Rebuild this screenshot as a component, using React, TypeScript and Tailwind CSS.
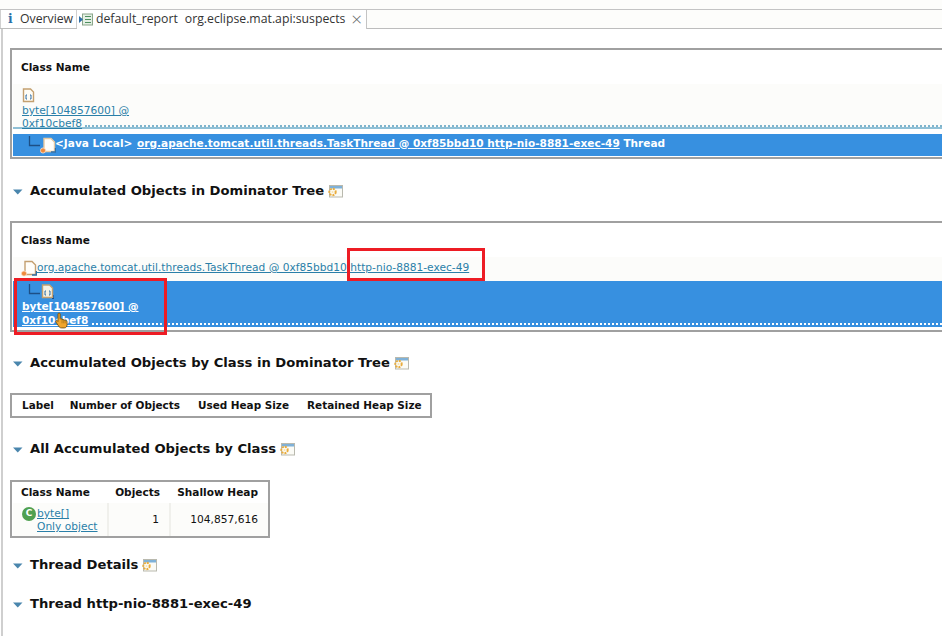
import React from "react";

function FileIcon({ light = false }: { light?: boolean }) {
  return (
    <svg width="13" height="15" viewBox="0 0 13 15" className="block shrink-0">
      <path d="M1.5 1 H8.5 L11.5 4 V13.5 H1.5 Z" fill={light ? "#f4f1e4" : "#fffdf6"} stroke="#c4a070" strokeWidth="1.4" />
      <path d="M5 7 H4 V11 H5 M8 7 H9 V11 H8" fill="none" stroke="#2f6fa8" strokeWidth="1" />
      {light && <path d="M11 14.5 H13 V11" fill="none" stroke="#1d4f86" strokeWidth="1.2" />}
    </svg>
  );
}

function ThreadIcon({ selected = false }: { selected?: boolean }) {
  return (
    <svg width="16" height="17" viewBox="0 0 16 17" className="block shrink-0">
      <path d="M4 1.5 H11 L14.5 5 V14.5 H4 Z" fill="#fffefa" stroke={selected ? "#e8c9a0" : "#c4a070"} strokeWidth="1.4" />
      <path d="M11 15 H15.5 V11" fill="none" stroke="#2f6fa8" strokeWidth="1.4" />
      <circle cx="3" cy="13.5" r="2.6" fill="#ef8a3c" stroke="#fbe3cf" strokeWidth="0.8" />
    </svg>
  );
}

function GearWindow() {
  return (
    <svg width="15" height="14" viewBox="0 0 15 14" className="block shrink-0">
      <rect x="1.5" y="1.5" width="13" height="11.5" fill="#fbfbf6" stroke="#b9b9ae" />
      <rect x="2" y="2" width="12" height="2.5" fill="#7fb1d8" />
      <circle cx="4.5" cy="8" r="3.2" fill="none" stroke="#e9ac3d" strokeWidth="2" strokeDasharray="2 1" />
      <circle cx="4.5" cy="8" r="1" fill="#f7e3ae" />
    </svg>
  );
}

function Section({ title, icon = true, className = "" }: { title: string; icon?: boolean; className?: string }) {
  return (
    <div className={`flex items-center h-5 pl-[5px] ${className}`}>
      <svg width="10" height="6" viewBox="0 0 10 6" className="block shrink-0 mr-[7px] mt-[2px]">
        <path d="M0 0.5 H9.5 L4.75 5.5 Z" fill="#4a86ad" />
      </svg>
      <span className="font-bold text-[13.15px] text-[#111111] whitespace-nowrap mr-[4px]">{title}</span>
      {icon && <GearWindow />}
    </div>
  );
}

function HandCursor() {
  return (
    <svg width="13" height="17" viewBox="0 0 14 18" className="absolute left-[55px] top-[312px]">
      <path
        d="M3.2 2 C3.2 0.6 5.6 0.6 5.6 2 V7.2 H7.6 V8 H9.4 V8.6 H11 C12.4 8.8 13 9.6 13 11 V13.5 C13 15.5 11.8 17 10 17 H7 C5.6 17 4.8 16.4 4 15.2 L1 10.6 C0.4 9.4 1.8 8.4 2.8 9.4 L3.2 10 Z"
        fill="#f0a52c"
        stroke="#6e4a0e"
        strokeWidth="0.9"
      />
      <path d="M7.6 8 V12 M9.4 8.6 V12 M11 8.8 V12" stroke="#9a6a14" strokeWidth="0.7" fill="none" />
    </svg>
  );
}

export default function App() {
  const link = "text-[#2a7fa8] underline";
  return (
    <div className="relative w-[942px] h-[636px] overflow-hidden bg-white font-['DejaVu_Sans',Verdana,sans-serif] text-[10.65px] text-[#111111]">
      <div className="h-[9px] bg-[#fdfdfb] border-b border-[#c4c4c4] box-content" />
      <div className="flex h-[18px] border-b border-[#bdbdbd] box-content bg-[#fdfdfb] font-['Open_Sans',sans-serif] text-[12.25px] text-[#333333]">
        <div className="flex items-center w-[77px] pl-[7px] bg-white border-l border-r border-[#d0d0d0]">
          <span className="font-['DejaVu_Serif',serif] font-bold text-[#2a6fa8] w-[12px]">i</span>
          <span>Overview</span>
        </div>
        <div className="flex items-center w-[290px] pl-[2px] bg-white border-r border-[#c4c4c4] relative -mb-px">
          <svg width="14" height="13" viewBox="0 0 14 13" className="block shrink-0 mr-[3px]">
            <rect x="3.5" y="1" width="10" height="11" fill="#e4efe4" stroke="#8aa58a" />
            <path d="M6 3.5 H12 M6 6.5 H12 M6 9.5 H12" stroke="#4f8f5f" />
            <path d="M0 3 L4 6.5 L0 10 Z" fill="#2f6fa8" />
          </svg>
          <span>default_report</span>
          <span className="ml-[7px]">org.eclipse.mat.api:suspects</span>
          <span className="ml-[6px] text-[#666666] text-[19px] font-light leading-none">×</span>
        </div>
      </div>

      <div className="ml-[1px] border-l-2 border-[#cfcfcf] h-[608px] pl-[7px] pt-[19px]">
        <div className="border-y-2 border-l-2 border-[#a0a0a0] h-[111px] pl-[1px] pt-[1px]">
          <div className="h-[33px] pl-[8px] pt-[9px] font-bold text-[10.55px] leading-[14px]">Class Name</div>
          <div className="h-[45px] bg-[#fcfcfa] pl-[9px] pt-[4px] border-b-2 border-[#8fc0d6]">
            <FileIcon />
            <div className={`${link} leading-[13px] mt-[1px]`}>byte[104857600] @</div>
            <div className="flex items-start leading-[13px]">
              <span className={`${link} whitespace-nowrap mr-[3px]`}>0xf10cbef8</span>
              <span className="flex-1 h-[10px] border-b-2 border-dotted border-[#7fb4cc]" />
            </div>
          </div>
          <div className="flex items-center h-[22px] mt-[5px] pb-[3px] bg-[#3790e0] text-white font-bold text-[10.55px] whitespace-nowrap pl-[15px]">
            <svg width="12" height="12" viewBox="0 0 12 12" className="block shrink-0 -mt-[4px]">
              <path d="M1.5 0 V9.5 H12" fill="none" stroke="#1d4f86" strokeWidth="1.3" />
            </svg>
            <div className="mt-[3px]"><ThreadIcon selected /></div>
            <span className="whitespace-pre -ml-[1px]">{"<Java Local> "}</span>
            <span className="underline ml-[1px]">org.apache.tomcat.util.threads.TaskThread @ 0xf85bbd10 http-nio-8881-exec-49</span>
            <span className="whitespace-pre"> Thread</span>
          </div>
        </div>

        <Section title="Accumulated Objects in Dominator Tree" className="-ml-[2px] mt-[22px]" />

        <div className="border-y-2 border-l-2 border-[#a0a0a0] h-[111px] mt-[20px] pl-[1px] pt-[1px]">
          <div className="h-[33px] pl-[8px] pt-[9px] font-bold text-[10.55px] leading-[14px]">Class Name</div>
          <div className="flex items-center h-[24px] pb-[2px] bg-[#fcfcfa] pl-[8px] whitespace-nowrap">
            <ThreadIcon />
            <span className="text-[#2a7fa8] underline whitespace-pre">org.apache.tomcat.util.threads.TaskThread @ 0xf85bbd10 http-nio-8881-exec-49</span>
          </div>
          <div className="h-[46px] bg-[#3790e0] text-white font-bold text-[10.55px] pl-[9px]">
            <div className="flex pl-[6px] pt-[3px] h-[18px]">
              <svg width="12" height="12" viewBox="0 0 12 12" className="block shrink-0">
                <path d="M1.5 0 V9.5 H12" fill="none" stroke="#1d4f86" strokeWidth="1.3" />
              </svg>
              <div className="ml-[1px]"><FileIcon light /></div>
            </div>
            <div className="underline leading-[14px]">byte[104857600] @</div>
            <div className="flex items-start leading-[14px]">
              <span className="underline whitespace-nowrap mr-[4px]">0xf10cbef8</span>
              <span className="flex-1 h-[12px] border-b-2 border-dotted border-white" />
            </div>
          </div>
        </div>

        <Section title="Accumulated Objects by Class in Dominator Tree" className="-ml-[2px] mt-[21px]" />

        <table className="mt-[20px] border-2 border-[#a0a0a0] border-collapse font-bold text-[10.45px]">
          <tbody>
            <tr className="h-[23px]">
              <td className="pl-[10px] pr-[7px]">Label</td>
              <td className="px-[9px]">Number of Objects</td>
              <td className="pl-[9px] pr-[9px]">Used Heap Size</td>
              <td className="pl-[9px] pr-[8px]">Retained Heap Size</td>
            </tr>
          </tbody>
        </table>

        <Section title="All Accumulated Objects by Class" className="-ml-[2px] mt-[21px]" />

        <div className="mt-[21px] w-[260px] h-[58px] border-2 border-[#a0a0a0] pl-[1px] flex flex-col">
          <div className="flex h-[21px] items-center font-bold text-[10.55px] shrink-0">
            <div className="w-[95px] pl-[8px]">Class Name</div>
            <div className="w-[62px] text-right pr-[10px]">Objects</div>
            <div className="w-[88px] text-right">Shallow Heap</div>
          </div>
          <div className="flex flex-1 bg-[#fcfcfa]">
            <div className="w-[96px] flex pl-[9px] pt-[3px] border-r-2 border-[#f0f0ec]">
              <span className="flex items-center justify-center w-[14px] h-[14px] mt-[1px] rounded-full bg-[#4fa050] text-white text-[9px] font-bold shrink-0">C</span>
              <div className="pl-[1px] pt-[1px] leading-[13px]">
                <div className={link}>byte[]</div>
                <div className={link}>Only object</div>
              </div>
            </div>
            <div className="w-[62px] flex items-center justify-end pr-[10px] border-r-2 border-[#f0f0ec]">1</div>
            <div className="w-[87px] flex items-center justify-end">104,857,616</div>
          </div>
        </div>

        <Section title="Thread Details" className="-ml-[2px] mt-[17px]" />
        <Section title="Thread http-nio-8881-exec-49" icon={false} className="-ml-[2px] mt-[19px]" />
      </div>

      <div className="absolute left-[14px] top-[278px] w-[153px] h-[57px] border-[3px] border-[#ed1c24]" />
      <div className="absolute left-[347px] top-[248px] w-[138px] h-[33px] border-[3px] border-[#ed1c24]" />
      <HandCursor />
    </div>
  );
}
